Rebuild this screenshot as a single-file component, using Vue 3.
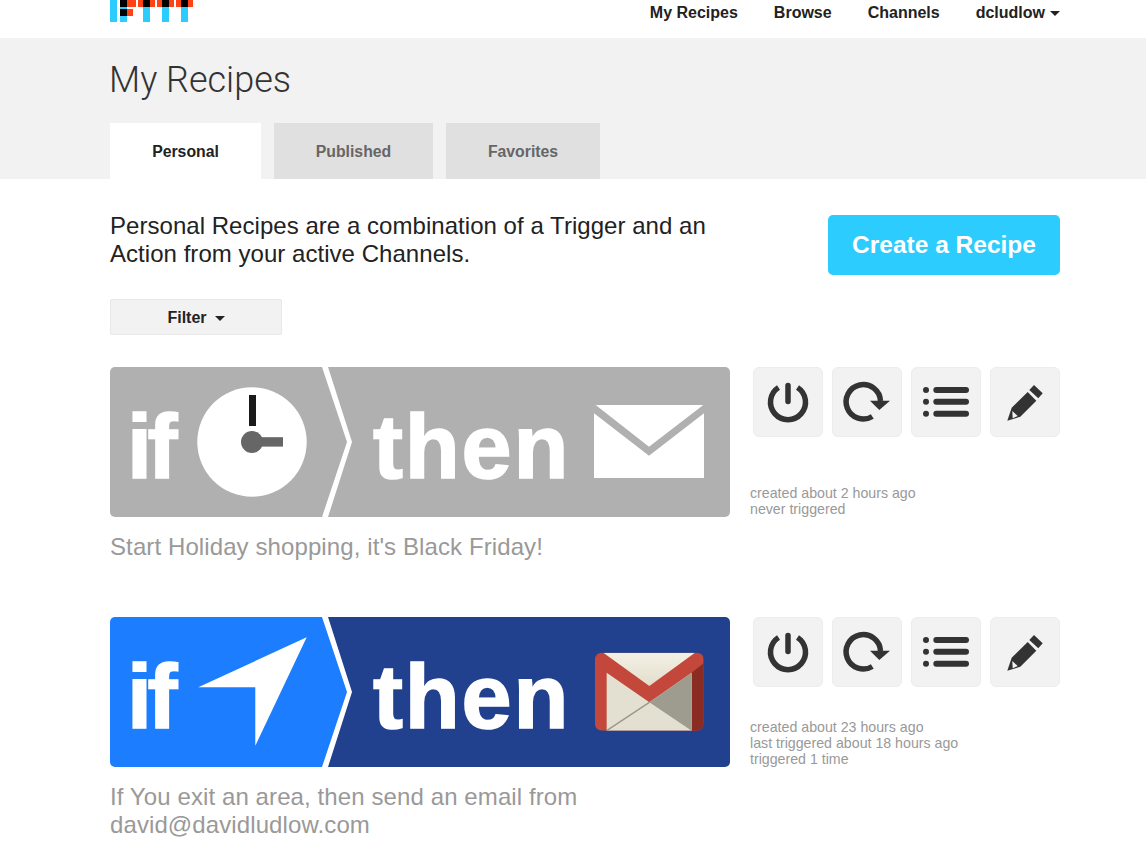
<script setup>
const recipes = [
  {
    id: 'friday',
    title: "Start Holiday shopping, it's Black Friday!",
    meta: ['created about 2 hours ago', 'never triggered'],
    left: '#b0b0b0',
    right: '#b0b0b0',
    trigger: 'clock',
    action: 'mail',
  },
  {
    id: 'area',
    title: 'If You exit an area, then send an email from david@davidludlow.com',
    meta: ['created about 23 hours ago', 'last triggered about 18 hours ago', 'triggered 1 time'],
    left: '#1c7eff',
    right: '#21418e',
    trigger: 'arrow',
    action: 'gmail',
  },
]
</script>

<template>
  <div class="page">
    <header class="top wrap">
      <svg class="logo" width="84" height="22" viewBox="0 0 84 22">
        <rect x="0" y="0" width="7" height="22" fill="#2dccff" />
        <rect x="10" y="7" width="7" height="15" fill="#2dccff" />
        <rect x="10" y="0" width="7" height="7" fill="#000" />
        <rect x="17" y="0" width="9" height="7" fill="#ff4314" />
        <rect x="10" y="9" width="7" height="7" fill="#000" />
        <rect x="17" y="9" width="6" height="7" fill="#ff4314" />
        <g v-for="x in [28, 47, 66]" :key="x">
          <rect :x="x" y="0" width="17" height="7" fill="#ff4314" />
          <rect :x="x + 5" y="0" width="7" height="7" fill="#000" />
          <rect :x="x + 5" y="7" width="7" height="15" fill="#2dccff" />
        </g>
      </svg>
      <nav class="nav">
        <a>My Recipes</a>
        <a>Browse</a>
        <a>Channels</a>
        <a class="user">dcludlow<i class="caret"></i></a>
      </nav>
    </header>

    <section class="band">
      <div class="wrap">
        <h1>My Recipes</h1>
        <div class="tabs">
          <a class="tab active tab-personal">Personal</a>
          <a class="tab tab-published">Published</a>
          <a class="tab tab-favorites">Favorites</a>
        </div>
      </div>
    </section>

    <main class="wrap">
      <div class="intro">
        <p>Personal Recipes are a combination of a Trigger and an Action from your active Channels.</p>
        <a class="create">Create a Recipe</a>
      </div>

      <button class="filter">Filter<i class="caret"></i></button>

      <div class="list">
        <article v-for="r in recipes" :key="r.id" class="recipe">
          <div class="main">
            <svg class="banner" width="620" height="150" viewBox="0 0 620 150">
              <defs>
                <linearGradient :id="r.id + '-flap'" x1="0" y1="0" x2="0" y2="1">
                  <stop offset="0" stop-color="#f4f0e4" />
                  <stop offset="1" stop-color="#e2decd" />
                </linearGradient>
                <clipPath :id="r.id + '-clip'">
                  <rect x="105" y="68" width="326" height="234" rx="20" />
                </clipPath>
              </defs>
              <polygon points="0,0 212,0 237,75 212,150 0,150" :fill="r.left" />
              <polygon points="218,0 620,0 620,150 218,150 242,75" :fill="r.right" />
              <text x="17" y="110.5" class="word word-if">if</text>
              <text x="263" y="110.5" class="word word-then">then</text>

              <g v-if="r.trigger === 'clock'">
                <circle cx="142" cy="75" r="54.7" fill="#fff" />
                <rect x="139" y="28" width="7" height="31" fill="#1a1a1a" />
                <rect x="142" y="70.2" width="31" height="9.4" fill="#666" />
                <circle cx="142" cy="75" r="11" fill="#666" />
              </g>
              <polygon v-else points="196.7,20.3 88.3,70.3 145.3,70.3 145.3,128.7" fill="#fff" />

              <g v-if="r.action === 'mail'" fill="#fff">
                <polygon points="485.7,38 593.3,38 539,79.7" />
                <polygon points="484,46.3 539,88.7 594,46.3 594,111 484,111" />
              </g>
              <g v-else transform="translate(450 13) scale(0.3333)" :clip-path="`url(#${r.id}-clip)`">
                <rect x="105" y="68" width="326" height="234" fill="#c4473b" />
                <polygon points="395,128 431,100 431,302 395,302" fill="#8b2c23" />
                <polygon points="130,68 405,68 268,168" :fill="`url(#${r.id}-flap)`" />
                <polygon points="140,128 268,217 395,128 395,302 140,302" fill="#e4e0d1" />
                <polygon points="268,217 395,128 395,302" fill="#9d9c8e" />
                <line x1="140" y1="302" x2="268" y2="217" stroke="#989788" stroke-width="4" />
              </g>
            </svg>
            <h2>{{ r.title }}</h2>
          </div>

          <aside class="side">
            <div class="actions">
              <button class="action">
                <svg width="70" height="70" viewBox="0 0 70 70" fill="none" stroke="#333" stroke-width="5.5">
                  <path d="M25.5 20.5A17.5 17.5 0 1 0 44.5 20.5" />
                  <path d="M35 18.5V34.5" stroke-linecap="round" />
                </svg>
              </button>
              <button class="action">
                <svg width="70" height="70" viewBox="0 0 70 70" fill="none" stroke="#333" stroke-width="5.5">
                  <path d="M48.5 34A17.2 17.2 0 1 0 40.3 49.5" />
                  <polygon points="38,33.7 58,33.7 47.3,43" fill="#333" stroke="none" />
                </svg>
              </button>
              <button class="action">
                <svg width="70" height="70" viewBox="0 0 70 70" fill="#333" stroke="#333" stroke-width="6" stroke-linecap="round">
                  <circle cx="15" cy="23" r="3" stroke="none" />
                  <circle cx="15" cy="34.7" r="3" stroke="none" />
                  <circle cx="15" cy="46.7" r="3" stroke="none" />
                  <path d="M25.3 23H55M25.3 34.7H55M25.3 46.7H55" />
                </svg>
              </button>
              <button class="action">
                <svg width="70" height="70" viewBox="0 0 70 70" fill="#333">
                  <polygon points="44,18 52.7,26.3 48.3,31.3 39.3,23" />
                  <polygon points="37.7,25 46.3,33.7 30.3,49.7 17.3,53.7 21.7,40.7" />
                  <polygon points="22.3,44 27.7,49 22.7,51.3" fill="#f2f2f2" />
                </svg>
              </button>
            </div>
            <div class="meta">
              <div v-for="line in r.meta" :key="line">{{ line }}</div>
            </div>
          </aside>
        </article>
      </div>
    </main>
  </div>
</template>

<style>
html, body { background: #fff; }
</style>

<style scoped>
.page {
  font-family: "Liberation Sans", Arial, sans-serif;
  color: #222;
}
.wrap {
  width: 950px;
  margin-left: 110px;
}
.top {
  height: 38px;
  display: flex;
  justify-content: space-between;
  align-items: flex-start;
}
.logo { display: block; }
.nav {
  display: flex;
  gap: 36px;
  font-size: 16px;
  font-weight: bold;
  line-height: 25px;
}
.caret {
  display: inline-block;
  width: 0;
  height: 0;
  border-left: 5px solid transparent;
  border-right: 5px solid transparent;
  border-top: 5px solid currentColor;
  vertical-align: middle;
}
.user .caret { margin-left: 5px; }
.band { background: #f2f2f2; height: 141px; }
h1 {
  margin: 0 0 0 -1px;
  padding-top: 20px;
  font-size: 36px;
  line-height: 44px;
  font-weight: 300;
  font-family: Roboto, "Liberation Sans", sans-serif;
  color: #333;
}
.tabs {
  display: flex;
  gap: 13px;
  margin-top: 21px;
}
.tab {
  height: 56px;
  line-height: 58px;
  text-align: center;
  font-size: 15.8px;
  font-weight: bold;
  background: #e0e0e0;
  color: #666;
}
.tab.active { background: #fff; color: #222; }
.tab-personal { width: 151px; }
.tab-published { width: 159px; }
.tab-favorites { width: 154px; }
.intro {
  margin-top: 36px;
  height: 60px;
  display: flex;
  justify-content: space-between;
  align-items: center;
}
.intro p {
  margin: 0 0 10px;
  width: 620px;
  font-size: 24px;
  line-height: 28px;
  letter-spacing: 0.04px;
}
.create {
  width: 232px;
  height: 60px;
  line-height: 60px;
  border-radius: 5px;
  text-align: center;
  background: #2dccff;
  color: #fff;
  font-size: 24.5px;
  font-weight: bold;
}
.filter {
  display: block;
  margin-top: 24px;
  width: 172px;
  height: 36px;
  padding: 2px 0 0;
  border: 1px solid #e8e8e8;
  border-radius: 2px;
  background: #f2f2f2;
  color: #222;
  font: bold 16px "Liberation Sans", Arial, sans-serif;
}
.filter .caret { margin-left: 8px; }
.list { margin-top: 32px; }
.recipe {
  display: flex;
  height: 250px;
}
.main { width: 620px; }
.banner {
  display: block;
  border-radius: 5px;
}
.word {
  font: bold 90px "Liberation Sans", Arial, sans-serif;
  fill: #fff;
  stroke: #fff;
  stroke-width: 1.6px;
}
.word-if { letter-spacing: -4.5px; }
.word-then { letter-spacing: 1.8px; }
h2 {
  margin: 16px 0 0;
  font-size: 24px;
  line-height: 28px;
  font-weight: normal;
  letter-spacing: 0.1px;
  color: #999;
}
.side {
  height: 150px;
  margin-left: 20px;
  width: 310px;
  display: flex;
  flex-direction: column;
  justify-content: space-between;
}
.actions {
  display: flex;
  gap: 9px;
  margin-left: 3px;
}
.action {
  width: 70px;
  height: 70px;
  padding: 0;
  box-sizing: border-box;
  border: 1px solid #ececec;
  border-radius: 6px;
  background: #f2f2f2;
  position: relative;
}
.action svg {
  position: absolute;
  left: -1px;
  top: -1px;
}
.meta {
  font-size: 14.2px;
  line-height: 16px;
  color: #999;
}
</style>
